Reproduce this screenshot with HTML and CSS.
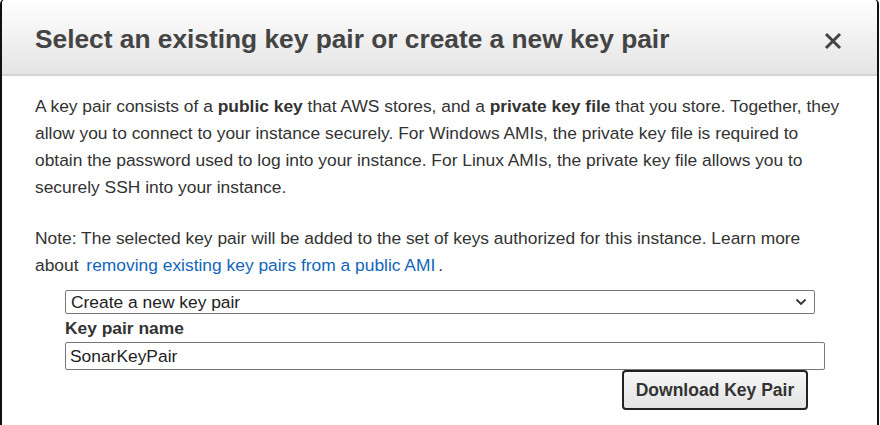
FILE: index.html
```html
<!DOCTYPE html>
<html>
<head>
<meta charset="utf-8">
<link rel="stylesheet" href="styles.css">
</head>
<body>
<div class="modal">
  <div class="modal-header">
    <h1 class="modal-title">Select an existing key pair or create a new key pair</h1>
    <svg class="close" width="18" height="18" viewBox="0 0 18 18"><path d="M2 2 L16 16 M16 2 L2 16" stroke="#444" stroke-width="3" fill="none"/></svg>
  </div>
  <div class="modal-body">
    <p class="intro">A key pair consists of a <b>public key</b> that AWS stores, and a <b>private key file</b> that you store. Together, they allow you to connect to your instance securely. For Windows AMIs, the private key file is required to obtain the password used to log into your instance. For Linux AMIs, the private key file allows you to securely SSH into your instance.</p>
    <p class="note">Note: The selected key pair will be added to the set of keys authorized for this instance. Learn more about <a class="link" href="#">removing existing key pairs from a public AMI</a>.</p>
    <div class="form">
      <div class="select">
        <span>Create a new key pair</span>
        <svg class="chev" width="12" height="8" viewBox="0 0 12 8"><path d="M1.5 1.5 L6 6 L10.5 1.5" fill="none" stroke="#333" stroke-width="1.8"/></svg>
      </div>
      <div class="label">Key pair name</div>
      <div class="input">SonarKeyPair</div>
      <div class="actions">
        <button class="btn">Download Key Pair</button>
      </div>
    </div>
  </div>
</div>
</body>
</html>
```
FILE: styles.css
```css
html, body {
  margin: 0;
  padding: 0;
  background: #fff;
  font-family: "Liberation Sans", Arial, sans-serif;
}
.modal {
  width: 875px;
  height: 440px;
  border-left: 2px solid #111;
  border-right: 2px solid #111;
  border-top: 1px solid #555;
  border-radius: 5px 5px 0 0;
  margin-top: -1px;
  background: #fff;
  overflow: hidden;
}
.modal-header {
  height: 74px;
  border-bottom: 2px solid #d4d4d4;
  background: linear-gradient(#ffffff, #e4e4e4);
  display: flex;
  align-items: center;
  justify-content: space-between;
  padding: 0 34px 0 33px;
}
.modal-title {
  margin: 0;
  font-size: 26.3px;
  font-weight: bold;
  color: #444;
  padding-top: 4px;
}
.close {
  margin-top: 7px;
  margin-right: 1px;
}
.modal-body {
  padding: 17px 33px 0 33px;
  color: #333;
  font-size: 17.4px;
  line-height: 27px;
}
.intro, .note {
  margin: 0;
}
.note {
  margin-top: 24px;
}
.link {
  color: #1166bb;
  text-decoration: none;
  padding: 0 3px;
}
.form {
  padding-left: 30px;
  margin-top: 11px;
}
.select {
  box-sizing: border-box;
  width: 750px;
  height: 24px;
  border: 1px solid #777;
  border-radius: 2px;
  display: flex;
  align-items: center;
  justify-content: space-between;
  padding: 0 7px 0 5px;
  font-size: 17.4px;
  color: #222;
}
.label {
  font-weight: bold;
  margin-top: 2px;
  line-height: 24px;
  color: #333;
}
.input {
  box-sizing: border-box;
  margin-top: 2px;
  width: 760px;
  height: 28px;
  border: 1px solid #777;
  border-radius: 2px;
  padding: 0 4px;
  font-size: 17.4px;
  line-height: 26px;
  color: #222;
}
.actions {
  width: 743px;
  display: flex;
  justify-content: flex-end;
}
.btn {
  font-family: "Liberation Sans", Arial, sans-serif;
  font-weight: bold;
  font-size: 17.5px;
  color: #333;
  width: 186px;
  height: 40px;
  border: 2px solid #222;
  border-radius: 4px;
  background: linear-gradient(#f7f7f7, #e2e2e2);
}
```
